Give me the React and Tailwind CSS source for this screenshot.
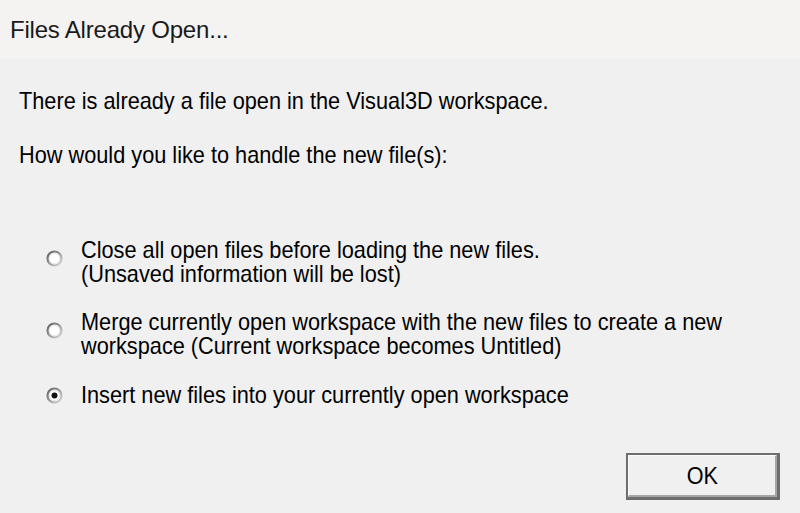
import React from "react";

function Radio({ checked }) {
  const id = checked ? "rg1" : "rg0";
  return (
    <svg width="17" height="17" viewBox="0 0 17 17" className="shrink-0 block">
      <defs>
        <linearGradient id={id} x1="0" y1="0" x2="1" y2="1">
          <stop offset="0" stopColor="#5f5f5f" />
          <stop offset="0.55" stopColor="#a0a0a0" />
          <stop offset="1" stopColor="#dcdcdc" />
        </linearGradient>
      </defs>
      <circle cx="8.5" cy="8.5" r="7" fill="#ffffff" stroke={`url(#${id})`} strokeWidth="2.2" />
      <circle cx="8.5" cy="8.5" r="5.2" fill="none" stroke="#e4e4e4" strokeWidth="1" />
      {checked && <circle cx="8.5" cy="8.5" r="3" fill="#111111" />}
    </svg>
  );
}

function Line({ children }) {
  return (
    <div className="h-[24px] whitespace-nowrap">
      <span className="inline-block origin-left scale-x-[0.905] text-[24px] leading-[24px] text-black">
        {children}
      </span>
    </div>
  );
}

function Option({ checked, lines, radioTop }) {
  return (
    <div className="flex items-start">
      <div className="w-[35px] pl-[46px] box-content" style={{ paddingTop: radioTop }}>
        <Radio checked={checked} />
      </div>
      <div className="flex flex-col">
        {lines.map((l, i) => (
          <Line key={i}>{l}</Line>
        ))}
      </div>
    </div>
  );
}

export default function App() {
  return (
    <div
      className="w-[800px] h-[513px] bg-[#f0f0f0] flex flex-col overflow-hidden"
      style={{ fontFamily: '"Liberation Sans", Arial, sans-serif' }}
    >
      <div className="h-[59px] bg-[#f4f3f2] flex items-center px-[10px] shrink-0">
        <span className="text-[24px] text-[#1a1a1a] tracking-[-0.2px]">Files Already Open...</span>
      </div>

      <div className="flex flex-col pt-[30px]">
        <div className="pl-[19px]">
          <Line>There is already a file open in the Visual3D workspace.</Line>
        </div>
        <div className="pl-[19px] mt-[30px]">
          <Line>How would you like to handle the new file(s):</Line>
        </div>

        <div className="mt-[71px] flex flex-col">
          <Option
            radioTop={12}
            lines={["Close all open files before loading the new files.", "(Unsaved information will be lost)"]}
          />
          <div className="mt-[24px]">
            <Option
              radioTop={12}
              lines={[
                "Merge currently open workspace with the new files to create a new",
                "workspace (Current workspace becomes Untitled)",
              ]}
            />
          </div>
          <div className="mt-[25px]">
            <Option checked radioTop={4} lines={["Insert new files into your currently open workspace"]} />
          </div>
        </div>

        <div className="flex justify-end pr-[20px] mt-[46px]">
          <button className="w-[154px] h-[47px] bg-[#6e6e6e] pt-[2px] pl-[2px] pr-[3px] pb-[3px] flex">
            <div className="flex-1 bg-[#f0f0f0] border-t border-l border-t-[#fcfcfc] border-l-[#fcfcfc] border-b-2 border-r-2 border-b-[#a6a6a6] border-r-[#a6a6a6] flex items-center justify-center">
              <span className="inline-block scale-x-[0.9] text-[24px] leading-[24px] text-black">OK</span>
            </div>
          </button>
        </div>
      </div>
    </div>
  );
}
